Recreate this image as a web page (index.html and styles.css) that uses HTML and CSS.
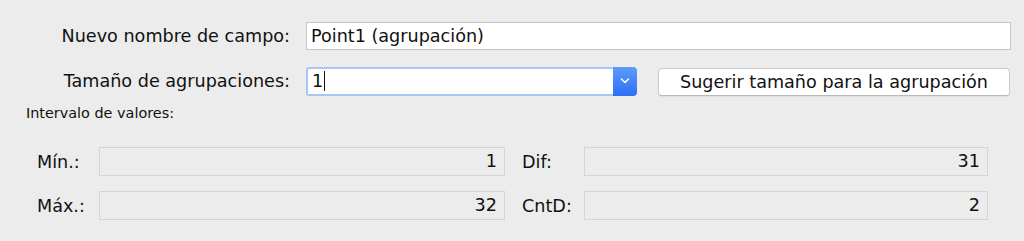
FILE: index.html
```html
<!DOCTYPE html>
<html lang="es">
<head>
    <meta charset="UTF-8">
    <meta name="viewport" content="width=device-width, initial-scale=1.0">
    <title>Crear agrupaciones</title>
    <link rel="stylesheet" href="styles.css">
</head>
<body>
    <div class="dialog">
        <div class="row row-name">
            <label class="lbl">Nuevo nombre de campo:</label>
            <div class="text-field wide">Point1 (agrupación)</div>
        </div>
        <div class="row row-size">
            <label class="lbl">Tamaño de agrupaciones:</label>
            <div class="combo">
                <div class="combo-input">1<span class="caret"></span></div>
                <div class="combo-btn">
                    <svg width="10" height="6" viewBox="0 0 10 6"><path d="M1.5 1 L5 4.5 L8.5 1" fill="none" stroke="#fff" stroke-width="1.6" stroke-linecap="round" stroke-linejoin="round"/></svg>
                </div>
            </div>
            <button class="btn">Sugerir tamaño para la agrupación</button>
        </div>

        <div class="section-title">Intervalo de valores:</div>

        <div class="range-grid">
            <span class="range-lbl">Mín.:</span>
            <div class="ro-field">1</div>
            <span class="range-lbl second">Dif:</span>
            <div class="ro-field">31</div>

            <span class="range-lbl">Máx.:</span>
            <div class="ro-field">32</div>
            <span class="range-lbl second">CntD:</span>
            <div class="ro-field">2</div>
        </div>
    </div>
</body>
</html>
```

FILE: styles.css
```css
body {
    margin: 0;
    background-color: #ececec;
    color: #111;
    font-family: "DejaVu Sans", Verdana, sans-serif;
    font-size: 17.6px;
}
.dialog {
    padding-top: 22px;
}
.row {
    display: flex;
    align-items: center;
}
.row-size {
    margin-top: 16px;
}
.lbl {
    width: 290px;
    text-align: right;
    flex-shrink: 0;
}
.text-field {
    box-sizing: border-box;
    height: 28px;
    margin-left: 16px;
    padding: 0 4px;
    line-height: 26px;
    background: #fff;
    border: 1px solid #c6c6c6;
}
.text-field.wide {
    width: 705px;
}
.combo {
    display: flex;
    margin-left: 16px;
    width: 331px;
    height: 29px;
    box-sizing: border-box;
}
.combo-input {
    flex: 1;
    box-sizing: border-box;
    padding: 0 4px;
    line-height: 25px;
    background: #fff;
    border: 2px solid #a9c6f2;
    border-right: none;
    border-radius: 3px 0 0 3px;
}
.caret {
    display: inline-block;
    width: 1px;
    height: 20px;
    background: #111;
    vertical-align: -4px;
    margin-left: 1px;
}
.combo-btn {
    width: 24px;
    display: flex;
    align-items: center;
    justify-content: center;
    background: linear-gradient(#5d9cf8, #2e6ef6);
    border-radius: 0 4px 4px 0;
}
.btn {
    margin: 2px 0 0 21px;
    width: 352px;
    height: 28px;
    font-family: inherit;
    font-size: 17.6px;
    color: #111;
    background: #fff;
    border: 1px solid #cbcbcb;
    border-bottom-color: #b9b9b9;
    border-radius: 4px;
    box-shadow: 0 1px 1px rgba(0, 0, 0, 0.06);
    padding: 0;
}
.section-title {
    margin: 9px 0 0 26px;
    font-size: 14.4px;
    line-height: 17px;
}
.range-grid {
    display: grid;
    grid-template-columns: 62px 406px 79px 404px;
    grid-auto-rows: 29px;
    row-gap: 15px;
    margin: 25px 0 0 37px;
    align-items: center;
}
.range-lbl.second {
    padding-left: 17px;
}
.ro-field {
    box-sizing: border-box;
    height: 29px;
    line-height: 27px;
    padding: 0 7px;
    text-align: right;
    border: 1px solid #d5d5d5;
    background: #ececec;
}
```
